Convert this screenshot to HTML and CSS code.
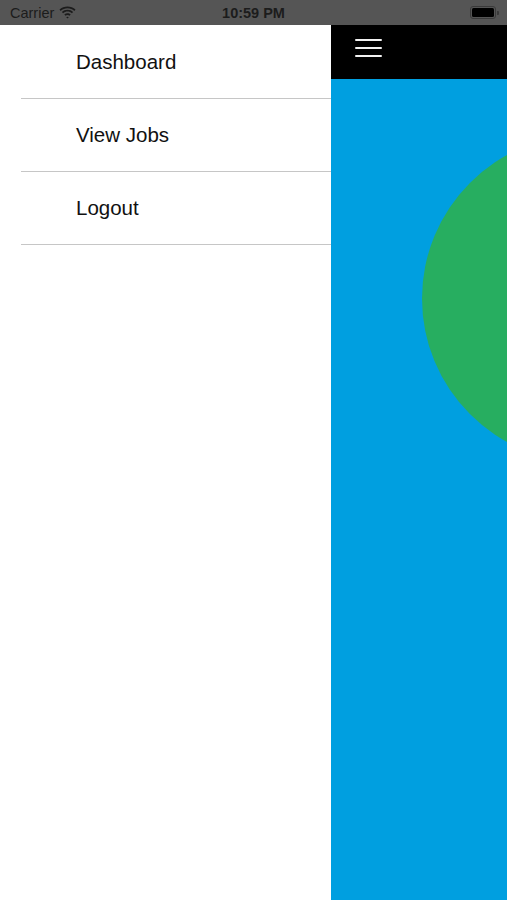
FILE: index.html
```html
<!DOCTYPE html>
<html>
<head>
<meta charset="utf-8">
<link rel="stylesheet" href="styles.css">
</head>
<body>
<div class="status">
  <div class="status-left">
    <span class="carrier">Carrier</span>
    <svg class="wifi" width="17" height="13" viewBox="0 0 17 13">
      <path d="M8.5 2.2c2.6 0 5 1 6.8 2.7l1.2-1.3C14.4 1.6 11.6.4 8.5.4S2.6 1.6.5 3.6l1.2 1.3C3.5 3.2 5.9 2.2 8.5 2.2z" fill="#1c1c1c"/>
      <path d="M8.5 5.6c1.7 0 3.2.6 4.4 1.7l1.2-1.3C12.6 4.6 10.6 3.8 8.5 3.8S4.4 4.6 2.9 6l1.2 1.3c1.2-1.1 2.7-1.7 4.4-1.7z" fill="#1c1c1c"/>
      <path d="M8.5 9c.8 0 1.5.3 2 .8l1.2-1.3c-.9-.8-2-1.3-3.2-1.3s-2.3.5-3.2 1.3l1.2 1.3c.5-.5 1.2-.8 2-.8z" fill="#1c1c1c"/>
      <path d="M8.5 12.6l1.3-1.4c-.3-.3-.8-.5-1.3-.5s-1 .2-1.3.5z" fill="#1c1c1c"/>
    </svg>
  </div>
  <div class="time">10:59 PM</div>
  <div class="status-right">
    <div class="battery"><div class="battery-fill"></div></div>
    <div class="battery-cap"></div>
  </div>
</div>
<div class="screen">
  <nav class="drawer">
    <div class="item">Dashboard</div>
    <div class="item">View Jobs</div>
    <div class="item">Logout</div>
  </nav>
  <main class="content">
    <div class="topbar">
      <div class="hamburger"><span></span><span></span><span></span></div>
    </div>
    <div class="body">
      <div class="circle"></div>
    </div>
  </main>
</div>
</body>
</html>
```
FILE: styles.css
```css
html, body {
  margin: 0;
  padding: 0;
  width: 507px;
  height: 900px;
  overflow: hidden;
  font-family: "Liberation Sans", Arial, sans-serif;
}
.status {
  height: 25px;
  background: #555555;
  display: flex;
  align-items: center;
  justify-content: space-between;
  padding: 0 8px 0 10px;
  box-sizing: border-box;
  position: relative;
  color: #1c1c1c;
}
.status-left {
  display: flex;
  align-items: center;
  gap: 5px;
}
.carrier {
  font-size: 14.5px;
}
.wifi {
  margin-top: -1px;
}
.time {
  position: absolute;
  left: 0;
  right: 0;
  text-align: center;
  font-size: 14.5px;
  font-weight: bold;
  pointer-events: none;
}
.status-right {
  display: flex;
  align-items: center;
}
.battery {
  width: 22px;
  height: 9px;
  border: 1.5px solid #3a3a3a;
  border-radius: 3px;
  padding: 1px;
  box-sizing: content-box;
}
.battery-fill {
  width: 100%;
  height: 100%;
  background: #000;
  border-radius: 1.5px;
}
.battery-cap {
  width: 2px;
  height: 4px;
  background: #3a3a3a;
  border-radius: 0 1px 1px 0;
  margin-left: 1px;
}
.screen {
  display: flex;
  height: 875px;
}
.drawer {
  width: 331px;
  background: #fff;
  flex: none;
  padding-top: 1px;
  box-sizing: border-box;
}
.item {
  height: 73px;
  box-sizing: border-box;
  margin-left: 21px;
  padding-left: 55px;
  border-bottom: 1px solid #c6c6c6;
  display: flex;
  align-items: center;
  font-size: 20.5px;
  color: #111;
}
.content {
  flex: 1;
  display: flex;
  flex-direction: column;
  overflow: hidden;
}
.topbar {
  height: 54px;
  background: #000;
  display: flex;
  align-items: flex-start;
  padding-left: 24px;
  flex: none;
}
.hamburger {
  margin-top: 14px;
  width: 27px;
  display: flex;
  flex-direction: column;
  gap: 6px;
}
.hamburger span {
  display: block;
  height: 2px;
  background: #f2f2f2;
  border-radius: 1px;
}
.body {
  flex: 1;
  background: #009fe0;
  position: relative;
}
.circle {
  position: absolute;
  left: 91px;
  top: 56px;
  width: 327px;
  height: 327px;
  border-radius: 50%;
  background: #27ae60;
}
```
